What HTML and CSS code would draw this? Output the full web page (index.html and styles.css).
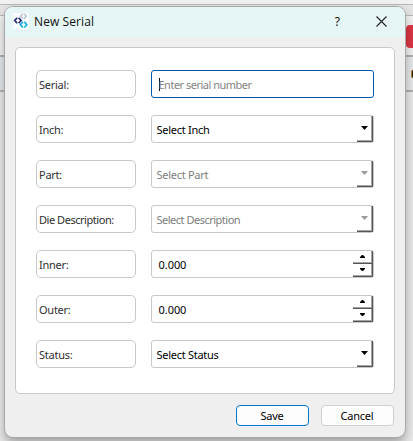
FILE: index.html
```html
<!DOCTYPE html>
<html lang="en">
<head>
<meta charset="utf-8">
<title>New Serial</title>
<link rel="stylesheet" href="styles.css">
</head>
<body>
<div class="backdrop">
  <div class="strip strip-top"></div>
  <div class="strip strip-head"></div>
  <div class="strip strip-tools"><span class="red-button"></span></div>
  <div class="strip strip-row"><span class="dot"></span></div>
  <div class="strip strip-body"></div>
</div>
<main class="dialog">
  <header class="titlebar">
    <svg class="logo" width="16" height="16" viewBox="0 0 16 16" fill="none" stroke-width="1.7">
      <rect width="16" height="16" fill="#fafdff"/>
      <path d="M9.800.700 7.700 3.200 9.800 5.700M11.200.700 13.300 3.200 11.200 5.700" stroke="#bcc3d2" stroke-width="1.500"/>
      <path d="M4.200 4.700 1.700 7.500 4.200 10.300M5.600 4.700 8.100 7.500 5.600 10.300" stroke="#25296f"/>
      <path d="M9.900 8.900 7.400 11.700 9.900 14.500M11.300 8.900 13.800 11.700 11.300 14.500" stroke="#14b3df"/>
    </svg>
    <h1 class="title">New Serial</h1>
    <span class="help">?</span>
    <svg class="close" width="11" height="11" viewBox="0 0 11 11" stroke="#222" stroke-width="1.1"><path d="M.5.5l10 10M10.500.500l-10 10"/></svg>
  </header>
  <section class="card">
    <div class="row"><label class="label">Serial:</label><div class="field focused"><span class="caret"></span><span class="value tight">Enter serial number</span></div></div>
    <div class="row"><label class="label">Inch:</label><div class="field"><span class="value">Select Inch</span><span class="drop"><svg width="7" height="4" viewBox="0 0 7 4"><path d="M0 0h7L3.500 4z"/></svg></span></div></div>
    <div class="row"><label class="label">Part:</label><div class="field disabled"><span class="value">Select Part</span><span class="drop"><svg width="7" height="4" viewBox="0 0 7 4"><path d="M0 0h7L3.500 4z"/></svg></span></div></div>
    <div class="row"><label class="label tight">Die Description:</label><div class="field disabled"><span class="value tight">Select Description</span><span class="drop"><svg width="7" height="4" viewBox="0 0 7 4"><path d="M0 0h7L3.500 4z"/></svg></span></div></div>
    <div class="row"><label class="label">Inner:</label><div class="field number"><span class="value">0.000</span><span class="spin"><span class="step"><svg width="5" height="3" viewBox="0 0 5 3"><path d="M0 3h5V2L3 0H2L0 2z"/></svg></span><span class="step"><svg width="5" height="3" viewBox="0 0 5 3"><path d="M0 0h5v1L3 3H2L0 1z"/></svg></span></span></div></div>
    <div class="row"><label class="label">Outer:</label><div class="field number"><span class="value">0.000</span><span class="spin"><span class="step"><svg width="5" height="3" viewBox="0 0 5 3"><path d="M0 3h5V2L3 0H2L0 2z"/></svg></span><span class="step"><svg width="5" height="3" viewBox="0 0 5 3"><path d="M0 0h5v1L3 3H2L0 1z"/></svg></span></span></div></div>
    <div class="row"><label class="label">Status:</label><div class="field"><span class="value">Select Status</span><span class="drop"><svg width="7" height="4" viewBox="0 0 7 4"><path d="M0 0h7L3.500 4z"/></svg></span></div></div>
  </section>
  <footer class="actions">
    <button class="button primary">Save</button>
    <button class="button">Cancel</button>
  </footer>
</main>
</body>
</html>
```
FILE: styles.css
```css
* { box-sizing: border-box; }
body {
  margin: 0;
  width: 413px;
  height: 441px;
  overflow: hidden;
  position: relative;
  font: 11px/14px "Noto Sans", sans-serif;
  color: #000;
}
.backdrop { display: flex; flex-direction: column; height: 441px; background: #e3e3e3; }
.strip { flex: none; display: flex; justify-content: flex-end; }
.strip-top { height: 5px; background: #f1f1f1; border-bottom: 1px solid #b8b8b8; }
.strip-head { height: 11px; background: #e4e4e4; border-bottom: 1px solid #b8b8b8; }
.strip-tools { height: 41px; background: #f2f2f2; border-bottom: 2px solid #b2b2b2; }
.red-button { width: 7px; height: 23px; margin-top: 9px; background: #dc3545; border-radius: 4px 0 0 4px; }
.strip-row { height: 35px; background: #e6e9ec; border-bottom: 2px solid #b2b2b2; }
.dot { width: 2px; height: 8px; margin-top: 13px; background: #2b1a10; border-left: 1px solid #c47a30; border-radius: 2px 0 0 2px; }
.strip-body { flex: 1; background: #eaeaea; }
.dialog {
  position: absolute;
  left: 5px;
  top: 7px;
  width: 400px;
  height: 430px;
  background: #efefef;
  border-radius: 8px;
  overflow: hidden;
  box-shadow: 0 0 0 1px #a8a8a8, 0 6px 12px rgba(0, 0, 0, .34);
}
.titlebar { display: flex; align-items: center; height: 30px; padding: 0 18px 1px 8px; background: #e6f6f6; }
.logo { margin-top: -1px; }
.title { margin: 0 0 0 5px; font: 12px/16px "Open Sans", sans-serif; letter-spacing: .1px; color: #111; }
.help { margin-left: auto; margin-right: 36px; font-size: 12px; color: #111; }
.card { margin: 10px 10px 0; height: 347px; padding: 22px 20px 0; display: flex; flex-direction: column; gap: 17px; background: #fff; border: 1px solid #c8c8c8; border-radius: 5px; }
.row { display: flex; gap: 15px; }
.label { width: 100px; height: 28px; padding: 7px 0 0 2px; border: 1px solid #c8c8c8; border-radius: 5px; color: #303030; white-space: nowrap; line-height: 13px; letter-spacing: -.25px; }
.field { display: flex; width: 223px; height: 28px; padding: 0 0 0 5px; border: 1px solid #c8c8c8; border-radius: 3px; white-space: nowrap; }
.value { padding-top: 7px; margin-left: -.5px; line-height: 13px; letter-spacing: -.28px; }
.label.tight { letter-spacing: -.46px; }
.value.tight { letter-spacing: -.5px; }
.focused { border-color: #0057b0; padding-left: 7px; color: #838383; }
.caret { width: 1px; height: 13px; margin: 7px -1px 0 0; background: #000; }
.disabled { color: #7d7d7d; }
.number { padding-left: 7px; }
.number .value { letter-spacing: -.05px; }
.drop { display: flex; align-items: center; justify-content: center; width: 16px; height: 26px; padding-bottom: 1px; margin-left: auto; border: solid #555; border-width: 0 1px 1px 0; box-shadow: inset -1px -1px #a5a5a5; }
.disabled svg { fill: #999; }
.spin { display: flex; flex-direction: column; width: 20px; margin-left: auto; }
.step { display: flex; align-items: center; justify-content: center; height: 13px; padding: 0 1px 1px 0; border: solid #555; border-width: 0 1px 1px 0; box-shadow: inset -1px -1px #a5a5a5; }
.actions { display: flex; justify-content: flex-end; gap: 12px; padding: 11px 11px 0 0; }
.button { width: 73px; height: 21px; padding: 0 1px 0 0; font: 11px/17px "Noto Sans", sans-serif; letter-spacing: -.2px; color: #000; background: #fdfdfd; border: 1px solid #d0d0d0; border-radius: 4px; }
.primary { border-color: #0078d4; }
```
